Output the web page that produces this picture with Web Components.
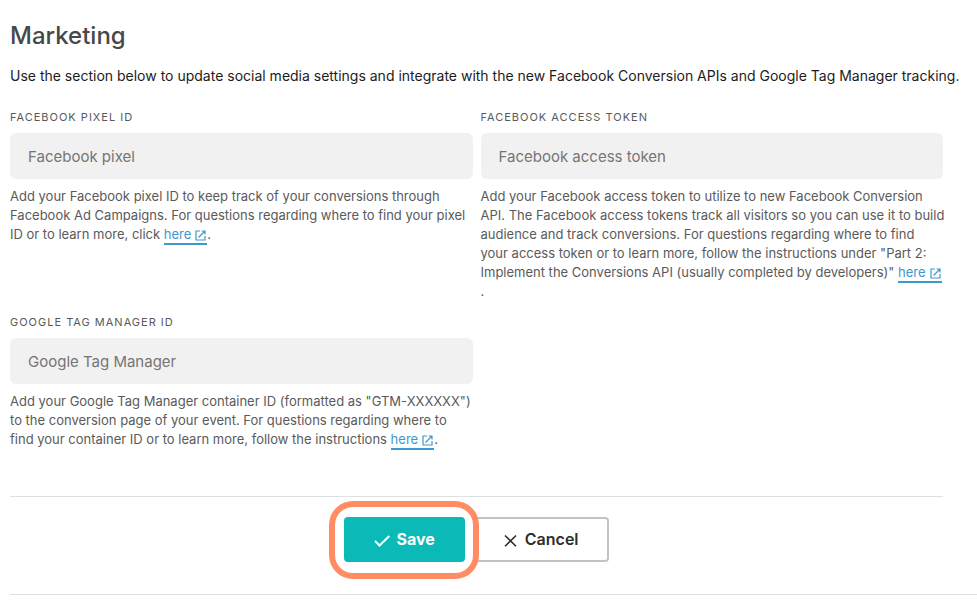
<!DOCTYPE html>
<html lang="en">
<head>
<meta charset="utf-8">
<meta name="viewport" content="width=device-width, initial-scale=1">
<title>Marketing</title>
<style>
  body { margin: 0; background: #fff; font-family: Inter, "Liberation Sans", sans-serif; color: #1a1a1a; }
</style>
</head>
<body>
<marketing-settings></marketing-settings>

<template id="t-page">
  <style>
    :host { display: block; padding: 20px 0 0 10px; }
    h1 { margin: 0; font-size: 24px; font-weight: 500; line-height: 32px; color: #484848; }
    .intro { margin: 14px 0 22px; font-size: 14px; line-height: 20px; color: #1c1c1c; }
    form { margin-right: 34px; }
    .fields { display: grid; grid-template-columns: 1fr 1fr; gap: 12px 8px; }
    form-actions { margin-top: 47px; }
    footer { margin-top: 32px; border-top: 1px solid #dde1e1; }
  </style>
  <h1>Marketing</h1>
  <p class="intro">Use the section below to update social media settings and integrate with the new Facebook Conversion APIs and Google Tag Manager tracking.</p>
  <form>
    <div class="fields">
      <text-field label="Facebook Pixel ID" placeholder="Facebook pixel">Add your Facebook pixel ID to keep track of your conversions through Facebook Ad Campaigns. For questions regarding where to find your pixel <br>ID or to learn more, click <ext-link>here</ext-link>.</text-field>
      <text-field label="Facebook Access Token" placeholder="Facebook access token">Add your Facebook access token to utilize to new Facebook Conversion API. The Facebook access tokens track all visitors so you can use it to build audience and track conversions. For questions regarding where to find <br>your access token or to learn more, follow the instructions under "Part 2: <br>Implement the Conversions API (usually completed by developers)" <ext-link>here</ext-link><br>.</text-field>
      <text-field label="Google Tag Manager ID" placeholder="Google Tag Manager">Add your Google Tag Manager container ID (formatted as "GTM-XXXXXX") to the conversion page of your event. For questions regarding where to <br>find your container ID or to learn more, follow the instructions <ext-link>here</ext-link>.</text-field>
    </div>
    <form-actions>
      <action-button variant="primary" highlighted>
        <svg slot="icon" width="16" height="16" viewBox="0 0 16 16" fill="none" stroke="currentColor" stroke-width="2"><path d="M1 10 5.5 14.5 15.3 5"/></svg>
        Save
      </action-button>
      <action-button variant="secondary">
        <svg slot="icon" width="16" height="16" viewBox="0 0 16 16" fill="none" stroke="currentColor" stroke-width="1.6"><path d="M2 4.5 13 15.3M13 4.5 2 15.3"/></svg>
        Cancel
      </action-button>
    </form-actions>
  </form>
  <footer></footer>
</template>

<template id="t-field">
  <style>
    :host { display: block; min-width: 0; }
    label { display: block; margin-bottom: 6px; font-size: 11px; line-height: 19px; letter-spacing: 1px; text-transform: uppercase; color: #5a5a5a; }
    input { display: block; box-sizing: border-box; width: 100%; height: 46px; padding: 0 18px; border: 0; border-radius: 6px; background: #f1f1f1; font: 15px Inter, "Liberation Sans", sans-serif; color: #333; }
    input::placeholder { color: #757575; opacity: 1; }
    p { margin: 8px -6px 0 0; font-size: 13px; line-height: 19px; color: #5a5a5a; }
  </style>
  <label for="control"></label>
  <input id="control" type="text" aria-describedby="help">
  <p id="help"><slot></slot></p>
</template>

<template id="t-link">
  <style>
    :host { display: inline-block; white-space: nowrap; }
    a { padding-bottom: 1px; border-bottom: 2px solid #3f97d0; color: #3f97d0; text-decoration: none; }
    svg { margin: 0 1px 0 4px; vertical-align: -2px; }
  </style>
  <a href="#"><slot></slot><svg width="11" height="11" viewBox="0 0 11 11" fill="none" stroke="currentColor" stroke-width="1.2" aria-hidden="true"><path d="M5 1H1v9h9V6M6.5 1H10v3.5M10 1 3.5 7.5"/></svg></a>
</template>

<template id="t-actions">
  <style>
    :host { display: flex; justify-content: center; gap: 8px; padding-top: 20px; border-top: 1px solid #dde1e1; }
  </style>
  <slot></slot>
</template>

<template id="t-button">
  <style>
    :host { display: block; position: relative; }
    button { display: flex; align-items: center; justify-content: center; gap: 6px; box-sizing: border-box; height: 45px; padding: 0 28px 2px; border: 2px solid #c2c2c2; border-radius: 4px; background: #fff; color: #2d2d2d; font: 600 16px Inter, "Liberation Sans", sans-serif; cursor: pointer; }
    :host([variant="primary"]) button { border-color: #0bbab6; background: #0bbab6; color: #fff; font-weight: 700; }
    :host([highlighted]) { z-index: 1; }
    :host([highlighted])::after { content: ""; position: absolute; inset: -16px -14px -17px -15px; border: 6px solid #ff8c63; border-radius: 24px; pointer-events: none; }
  </style>
  <button type="button"><slot name="icon"></slot><span><slot></slot></span></button>
</template>

<script>
  class TemplateElement extends HTMLElement {
    constructor() {
      super();
      this.attachShadow({ mode: 'open' })
        .append(document.getElementById(this.constructor.template).content.cloneNode(true));
    }
  }
  class ExtLink extends TemplateElement { static template = 't-link'; }
  class FormActions extends TemplateElement { static template = 't-actions'; }
  class ActionButton extends TemplateElement { static template = 't-button'; }
  class TextField extends TemplateElement {
    static template = 't-field';
    connectedCallback() {
      this.shadowRoot.querySelector('label').textContent = this.getAttribute('label');
      this.shadowRoot.querySelector('input').placeholder = this.getAttribute('placeholder');
    }
  }
  class MarketingSettings extends TemplateElement { static template = 't-page'; }
  customElements.define('ext-link', ExtLink);
  customElements.define('form-actions', FormActions);
  customElements.define('action-button', ActionButton);
  customElements.define('text-field', TextField);
  customElements.define('marketing-settings', MarketingSettings);
</script>
</body>
</html>
